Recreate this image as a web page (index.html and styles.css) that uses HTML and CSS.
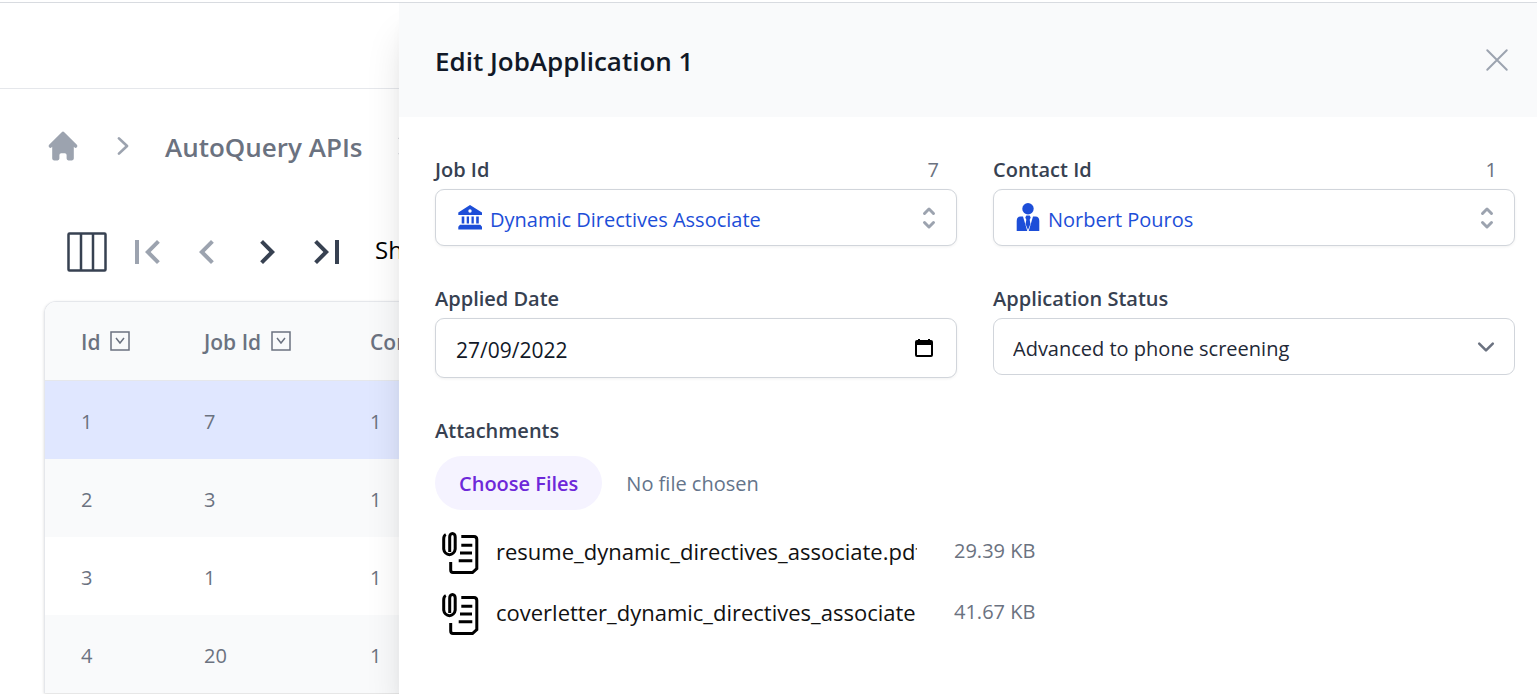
FILE: index.html
```html
<!DOCTYPE html>
<html lang="en">
<head>
<meta charset="utf-8">
<title>Edit JobApplication</title>
<link rel="stylesheet" href="styles.css">
</head>
<body>
<div class="page">
  <header class="topbar"></header>
  <nav class="breadcrumb" aria-label="Breadcrumb">
    <a href="#" class="crumb-home" aria-label="Home"><svg class="icon-36" viewBox="0 0 20 20" fill="currentColor"><path d="M10.707 2.293a1 1 0 00-1.414 0l-7 7a1 1 0 001.414 1.414L4 10.414V17a1 1 0 001 1h2a1 1 0 001-1v-2a1 1 0 011-1h2a1 1 0 011 1v2a1 1 0 001 1h2a1 1 0 001-1v-6.586l.293.293a1 1 0 001.414-1.414l-7-7z"/></svg></a>
    <svg class="icon-36" viewBox="0 0 20 20" fill="currentColor"><path d="M7.21 14.77a.75.75 0 01.02-1.06L11.168 10 7.23 6.29a.75.75 0 111.04-1.08l4.5 4.25a.75.75 0 010 1.08l-4.5 4.25a.75.75 0 01-1.06-.02z"/></svg>
    <a href="#" class="crumb">AutoQuery APIs</a>
    <svg class="icon-36" viewBox="0 0 20 20" fill="currentColor"><path d="M7.21 14.77a.75.75 0 01.02-1.06L11.168 10 7.23 6.29a.75.75 0 111.04-1.08l4.5 4.25a.75.75 0 010 1.08l-4.5 4.25a.75.75 0 01-1.06-.02z"/></svg>
  </nav>
  <div class="toolbar">
    <button type="button" class="tool" aria-label="Columns"><svg viewBox="0 0 48 48" fill="none" stroke="currentColor" stroke-width="2.500"><rect x="5.500" y="5.500" width="37" height="37" rx="1"/><path d="M18 5v38M30 5v38"/></svg></button>
    <button type="button" class="tool tool-off" aria-label="First page"><svg viewBox="0 0 24 24" fill="currentColor"><path d="M18.410 16.590L13.820 12l4.590-4.590L17 6l-6 6l6 6zM6 6h2v12H6z"/></svg></button>
    <button type="button" class="tool tool-off" aria-label="Previous page"><svg viewBox="0 0 24 24" fill="currentColor"><path d="M15.410 7.410L14 6l-6 6l6 6l1.410-1.410L10.830 12z"/></svg></button>
    <button type="button" class="tool" aria-label="Next page"><svg viewBox="0 0 24 24" fill="currentColor"><path d="M10 6L8.590 7.410L13.170 12l-4.580 4.590L10 18l6-6z"/></svg></button>
    <button type="button" class="tool" aria-label="Last page"><svg viewBox="0 0 24 24" fill="currentColor"><path d="M5.590 7.410L10.180 12l-4.590 4.590L7 18l6-6l-6-6zM16 6h2v12h-2z"/></svg></button>
    <span class="showing">Showing</span>
  </div>
  <div class="table-card">
    <table class="grid">
      <colgroup><col class="col-id"><col class="col-job"><col></colgroup>
      <thead><tr>
        <th><span class="th-in">Id <svg class="filter" viewBox="0 0 20 20" fill="none" stroke="currentColor"><rect x="1" y="1" width="18" height="18" stroke-width="1.500"/><path d="M6 7l4 5 4-5" stroke-width="1.500"/></svg></span></th>
        <th><span class="th-in">Job Id <svg class="filter" viewBox="0 0 20 20" fill="none" stroke="currentColor"><rect x="1" y="1" width="18" height="18" stroke-width="1.500"/><path d="M6 7l4 5 4-5" stroke-width="1.500"/></svg></span></th>
        <th><span class="th-in">Contact Id</span></th>
      </tr></thead>
      <tbody>
        <tr class="selected"><td>1</td><td>7</td><td>1</td></tr>
        <tr><td>2</td><td>3</td><td>1</td></tr>
        <tr><td>3</td><td>1</td><td>1</td></tr>
        <tr><td>4</td><td>20</td><td>1</td></tr>
      </tbody>
    </table>
  </div>
</div>

<section class="panel" role="dialog" aria-labelledby="panel-title">
  <header class="panel-head">
    <h2 id="panel-title">Edit JobApplication 1</h2>
    <button type="button" class="close" aria-label="Close"><svg class="icon-36" viewBox="0 0 24 24" fill="none" stroke="currentColor" stroke-width="1.300" stroke-linecap="round"><path d="M5.500 5.500l13 13M18.500 5.500l-13 13"/></svg></button>
  </header>
  <form class="form">
    <div class="field">
      <div class="label-row"><label for="job">Job Id</label><span class="hint">7</span></div>
      <button type="button" id="job" class="control combo">
        <svg class="lookup-icon" viewBox="0 0 28 32" fill="currentColor"><path fill-rule="evenodd" d="M14 3L26 10.500V13H2.300v-2.500zM14 7.300a1.700 1.700 0 100 3.400 1.700 1.700 0 000-3.400z"/><path d="M5.700 14.500h2.600V21.500H5.700zM10.700 14.500h2.300V21.500h-2.300zM15.500 14.500h2.300V21.500h-2.300zM20.200 14.500h2.600V21.500h-2.600zM4 22.700h20.300l1.700 2V27.500H2.300v-2.800z"/></svg>
        <span class="combo-text">Dynamic Directives Associate</span>
        <svg class="updown" viewBox="0 0 20 20" fill="currentColor"><path d="M10 3a1 1 0 01.707.293l3 3a1 1 0 01-1.414 1.414L10 5.414 7.707 7.707a1 1 0 01-1.414-1.414l3-3A1 1 0 0110 3zm-3.707 9.293a1 1 0 011.414 0L10 14.586l2.293-2.293a1 1 0 011.414 1.414l-3 3a1 1 0 01-1.414 0l-3-3a1 1 0 010-1.414z"/></svg>
      </button>
    </div>
    <div class="field">
      <div class="label-row"><label for="contact">Contact Id</label><span class="hint">1</span></div>
      <button type="button" id="contact" class="control combo">
        <svg class="lookup-icon" viewBox="0 0 28 32" fill="currentColor"><circle cx="14" cy="6.700" r="5.700"/><path d="M2.700 29V19Q2.700 14.500 6.500 14.500H9L13.300 29zM25.300 29V19Q25.300 14.500 21.500 14.500H19L14.700 29zM12.300 13.500h3.400l1 2-1 2.200.7 4.300L14 28l-2.400-6 .7-4.300-1-2.200z"/></svg>
        <span class="combo-text">Norbert Pouros</span>
        <svg class="updown" viewBox="0 0 20 20" fill="currentColor"><path d="M10 3a1 1 0 01.707.293l3 3a1 1 0 01-1.414 1.414L10 5.414 7.707 7.707a1 1 0 01-1.414-1.414l3-3A1 1 0 0110 3zm-3.707 9.293a1 1 0 011.414 0L10 14.586l2.293-2.293a1 1 0 011.414 1.414l-3 3a1 1 0 01-1.414 0l-3-3a1 1 0 010-1.414z"/></svg>
      </button>
    </div>
    <div class="field">
      <div class="label-row"><label for="applied">Applied Date</label></div>
      <div class="control date">
        <input type="text" id="applied" value="27/09/2022">
        <button type="button" class="calendar" aria-label="Open calendar"><svg viewBox="0 0 20 20" fill="currentColor" fill-rule="evenodd"><path d="M4 1h2v1h8V1h2v1h1a2 2 0 012 2v13a2 2 0 01-2 2H3a2 2 0 01-2-2V4a2 2 0 012-2h1zM3 7v10h14V7z"/></svg></button>
      </div>
    </div>
    <div class="field">
      <div class="label-row"><label for="status">Application Status</label></div>
      <div class="select-wrap">
        <select id="status" class="control"><option>Advanced to phone screening</option></select>
        <svg class="caret" viewBox="0 0 20 20" fill="none" stroke="currentColor" stroke-width="1.500" stroke-linecap="round" stroke-linejoin="round"><path d="M6 8l4 4 4-4"/></svg>
      </div>
    </div>
    <div class="field wide">
      <div class="label-row"><label for="files">Attachments</label></div>
      <input type="file" id="files" class="files" multiple>
      <ul class="file-list">
        <li><svg class="doc" viewBox="0 0 40 44" fill="none" stroke="currentColor" stroke-width="3"><path d="M4.800 3.500Q2.700 4.500 2.700 8V18a5.800 6.500 0 0011.500 0V6a2.700 3.500 0 00-5.500 0V21M20.300 5.500H33Q35.800 5.500 35.800 8.500V37.500L31.500 41.500H12Q9.700 41.500 9.700 39V31M20.300 14.300h11M19 22h12M17.700 29.700h13.600"/></svg><span class="file-name">resume_dynamic_directives_associate.pdf</span><span class="file-size">29.39 KB</span></li>
        <li><svg class="doc" viewBox="0 0 40 44" fill="none" stroke="currentColor" stroke-width="3"><path d="M4.800 3.500Q2.700 4.500 2.700 8V18a5.800 6.500 0 0011.500 0V6a2.700 3.500 0 00-5.500 0V21M20.300 5.500H33Q35.800 5.500 35.800 8.500V37.500L31.500 41.500H12Q9.700 41.500 9.700 39V31M20.300 14.300h11M19 22h12M17.700 29.700h13.600"/></svg><span class="file-name">coverletter_dynamic_directives_associate.pdf</span><span class="file-size">41.67 KB</span></li>
      </ul>
    </div>
  </form>
</section>
</body>
</html>
```
FILE: styles.css
```css
* { box-sizing: border-box; }
body {
  margin: 0;
  height: 100vh;
  overflow: hidden;
  background: #fff;
  color: #111;
  font-family: "Open Sans", "Noto Sans", sans-serif;
  font-size: 20px;
  line-height: 30px;
}
button, input, select { font: inherit; color: inherit; margin: 0; }
button { padding: 0; border: 0; background: none; cursor: pointer; }
svg { display: block; flex: none; }
a { color: inherit; text-decoration: none; }
.icon-36 { width: 36px; height: 36px; }

.page { margin-top: 2px; border-top: 1px solid #d8dbe0; }
.topbar { height: 86px; border-bottom: 1px solid #e5e7eb; }
.breadcrumb {
  display: flex;
  align-items: center;
  gap: 24px;
  height: 36px;
  margin: 39px 0 0 45px;
  color: #9ca3af;
}
.crumb { padding-top: 2px; font-size: 26px; line-height: 36px; font-weight: 600; color: #6b7280; white-space: nowrap; }
.toolbar { display: flex; align-items: center; gap: 12px; margin: 64px 0 0 63px; }
.tool { color: #374151; }
.tool svg { width: 48px; height: 48px; }
.tool-off { color: #9ca3af; }
.showing { padding-bottom: 4px; font-size: 24px; margin-left: 12px; color: #000; }

.table-card {
  margin: 25px 45px 0 44px;
  border: 1px solid #e5e7eb;
  border-bottom: 0;
  border-radius: 12px 12px 0 0;
  box-shadow: 0 1px 3px rgba(0, 0, 0, .15);
  overflow: hidden;
}
.grid { width: 100%; border-collapse: separate; border-spacing: 0; table-layout: fixed; color: #6b7280; }
.col-id { width: 123px; }
.col-job { width: 166px; }
.grid th, .grid td { height: 78px; padding: 4px 0 0 36px; text-align: left; }
.grid th { height: 79px; padding-top: 2px; background: #f9fafb; border-bottom: 1px solid #e5e7eb; font-size: 21px; font-weight: 600; }
.grid tbody tr:nth-child(even) { background: #f9fafb; }
.grid tbody tr.selected { background: #e0e7ff; }
.th-in { display: flex; align-items: center; gap: 10px; }
.filter { width: 20px; height: 20px; margin-bottom: 2px; }

.panel {
  position: absolute;
  top: 3px;
  right: 0;
  bottom: 0;
  left: 399px;
  background: #fff;
  box-shadow: 0 30px 38px -8px rgba(0, 0, 0, .16), 0 12px 15px -9px rgba(0, 0, 0, .1);
}
.panel-head {
  display: flex;
  justify-content: space-between;
  align-items: center;
  height: 114px;
  padding: 0 22px 0 36px;
  background: #f9fafb;
}
.panel-head h2 { margin: 0; padding-top: 2px; font-size: 26px; line-height: 36px; font-weight: 600; color: #111827; }
.close { color: #9ca3af; }
.form {
  display: grid;
  grid-template-columns: 1fr 1fr;
  column-gap: 36px;
  row-gap: 36px;
  padding: 36px 22px 0 36px;
}
.field { min-width: 0; }
.wide { grid-column: 1 / -1; }
.label-row { display: flex; justify-content: space-between; height: 36px; padding: 2px 18px 0 0; color: #374151; font-weight: 600; }
.hint { color: #6b7280; font-weight: 400; }
.control {
  width: 100%;
  height: 57px;
  border: 1px solid #d1d5db;
  border-radius: 9px;
  background: #fff;
  box-shadow: 0 1px 3px rgba(0, 0, 0, .06);
}
.combo { display: flex; align-items: center; padding: 0 12px 0 20px; color: #1d4ed8; text-align: left; }
.lookup-icon { width: 28px; height: 32px; }
.combo-text { flex: 1; margin-left: 6px; padding-top: 4px; }
.updown { width: 30px; height: 30px; color: #9ca3af; }
.date { display: flex; align-items: center; justify-content: space-between; height: 60px; padding: 0 22px 0 20px; color: #111827; }
.date input { flex: 1; min-width: 0; padding: 4px 0 0; border: 0; outline: 0; background: none; font-size: 21px; }
.calendar svg { width: 20px; height: 20px; color: #000; }
.select-wrap { display: grid; align-items: center; }
.select-wrap > * { grid-area: 1 / 1; }
.select-wrap select { appearance: none; padding: 4px 60px 0 19px; color: #1f2937; box-shadow: none; }
.caret { width: 34px; height: 34px; margin-right: 12px; justify-self: end; pointer-events: none; color: #6b7280; }
.files { display: block; width: 100%; margin-top: 6px; color: #64748b; }
.files::file-selector-button {
  height: 54px;
  margin: 0 24px 0 0;
  padding: 2px 24px 0;
  border: 0;
  border-radius: 27px;
  background: #f5f3ff;
  color: #6d28d9;
  font: inherit;
  font-weight: 600;
}
.file-list { display: grid; gap: 17px; margin: 21px 0 0; padding: 0 0 0 6px; list-style: none; }
.file-list li { display: flex; align-items: center; height: 44px; }
.doc { width: 40px; height: 44px; color: #000; }
.file-name { flex: 0 1 421px; margin: 0 37px 4px 15px; overflow: hidden; white-space: nowrap; font-size: 22px; }
.file-size { margin-bottom: 4px; color: #6b7280; white-space: nowrap; }
```
